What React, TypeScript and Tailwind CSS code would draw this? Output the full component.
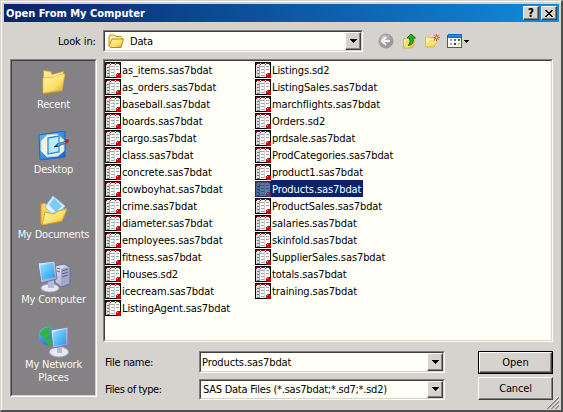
import React from "react";

const left = ["as_items.sas7bdat", "as_orders.sas7bdat", "baseball.sas7bdat", "boards.sas7bdat", "cargo.sas7bdat", "class.sas7bdat", "concrete.sas7bdat", "cowboyhat.sas7bdat", "crime.sas7bdat", "diameter.sas7bdat", "employees.sas7bdat", "fitness.sas7bdat", "Houses.sd2", "icecream.sas7bdat", "ListingAgent.sas7bdat"];
const right = ["Listings.sd2", "ListingSales.sas7bdat", "marchflights.sas7bdat", "Orders.sd2", "prdsale.sas7bdat", "ProdCategories.sas7bdat", "product1.sas7bdat", "Products.sas7bdat", "ProductSales.sas7bdat", "salaries.sas7bdat", "skinfold.sas7bdat", "SupplierSales.sas7bdat", "totals.sas7bdat", "training.sas7bdat"];

const sunken = "border border-t-[#808080] border-l-[#808080] border-b-white border-r-white";
const sunkenInner = "border border-t-[#404040] border-l-[#404040] border-b-[#d6d3ce] border-r-[#d6d3ce]";
const raised = "border border-t-white border-l-white border-b-[#404040] border-r-[#404040] shadow-[inset_-1px_-1px_0_#848284]";

function TableIcon({ selected }: { selected?: boolean }) {
  const paper = selected ? "#6078a4" : "#fff";
  const header = selected ? "#45436b" : "#94080c";
  const line = selected ? "#354f84" : "#a5a5a5";
  return (
    <svg width="16" height="16" viewBox="0 0 16 16" shapeRendering="crispEdges" className="shrink-0">
      <rect width="16" height="16" fill={selected ? "#172b58" : "#000"} />
      <rect x="1" y="1" width="14" height="14" fill={paper} />
      <path d="M1 1h4v1H1zM6 1h4v1H6zM11 1h4v1h-4zM1 2h1v1H1zM5 2h1v1H5zM10 2h1v1h-1zM14 2h1v1h-1z" fill={header} />
      <path d="M1 3h3v12H1z" fill={selected ? "#4e6596" : "#dedede"} />
      <path d="M5 4h4v1H5zM11 4h3v1h-3zM6 7h3v1H6zM11 7h3v1h-3zM6 10h3v1H6zM6 13h3v1H6zM4 3h1v12H4z" fill={line} />
      <path d="M2 5h2v1H2zM2 8h2v1H2zM2 11h2v1H2zM2 14h2v1H2z" fill={selected ? "#2c4478" : "#737373"} />
      <path d="M9 3h1v12H9z" fill={selected ? "#516a9b" : "#cecece"} />
      <path d="M12 11h3v1h1v3h-1v1h-3v-1h-1v-3h1z" fill={selected ? "#66365c" : "#d40000"} />
      <path d="M12 12h1v1h-1z" fill={selected ? "#8190b0" : "#ff9b91"} />
    </svg>
  );
}

function FileRow({ name, selected }: { name: string; selected?: boolean }) {
  return (
    <div className="flex h-[17px] items-center tracking-[-0.1px]">
      <TableIcon selected={selected} />
      <span className={selected ? "flex h-[17px] items-center bg-[#0a246a] pt-[2px] pl-px pr-[2px] text-white" : "pt-[2px] pl-px"}>{name}</span>
    </div>
  );
}

function Arrow() {
  return (
    <span className={`flex w-4 shrink-0 items-center justify-center bg-[#d6d3ce] ${raised}`}>
      <svg width="7" height="4" shapeRendering="crispEdges"><path d="M0 0h7v1H0zM1 1h5v1H1zM2 2h3v1H2zM3 3h1v1H3z" /></svg>
    </span>
  );
}

function Combo({ className, children }: { className: string; children: React.ReactNode }) {
  return (
    <div className={`${sunken} ${className}`}>
      <div className={`flex h-full bg-[#fffff7] ${sunkenInner}`}>
        <div className="flex flex-1 items-center overflow-hidden">{children}</div>
        <Arrow />
      </div>
    </div>
  );
}

function Gradients() {
  return (
    <svg width="0" height="0" className="absolute">
      <defs>
        <linearGradient id="folder" x1="0" y1="0" x2="1" y2="1"><stop stopColor="#fff7ad" /><stop offset=".6" stopColor="#f9df68" /><stop offset="1" stopColor="#d9a51f" /></linearGradient>
        <linearGradient id="screen" x1="0" y1="0" x2="1" y2="1"><stop stopColor="#8de8ff" /><stop offset="1" stopColor="#2795f2" /></linearGradient>
        <linearGradient id="shell" x1="0" y1="0" x2="1" y2="1"><stop stopColor="#f4f4ff" /><stop offset="1" stopColor="#8d91bd" /></linearGradient>
        <linearGradient id="blue" x1="0" y1="0" x2="1" y2="1"><stop stopColor="#66bdf8" /><stop offset="1" stopColor="#1261c8" /></linearGradient>
        <radialGradient id="grey" cx=".35" cy=".3"><stop stopColor="#d0d0d0" /><stop offset="1" stopColor="#9b9b9b" /></radialGradient>
      </defs>
    </svg>
  );
}

const RecentIcon = () => (
  <svg width="32" height="32" viewBox="0 0 32 32">
    <path d="M5 4l8 1 2 3 11-3v3l-2 17-19 3z" fill="#dca52c" />
    <path d="M6 5l6 1 2 3 11-3v3L6 13z" fill="#ffe987" />
    <path d="M16 9l10-1-1 3-10 2z" fill="#fff" />
    <path d="M5 12l11-1 3-2 8-1-3 16-19 3z" fill="url(#folder)" stroke="#dfb139" strokeWidth=".7" />
  </svg>
);
const DesktopIcon = () => (
  <svg width="32" height="32" viewBox="0 0 32 32">
    <path d="M1 4l26-4v26L2 29z" fill="url(#blue)" stroke="#1769cf" />
    <path d="M9 4l10-1 7 6v11l-6 5-11 1-6-6V10z" fill="#f5f1df" stroke="#b6d2e3" />
    <path d="M10 7l11-2v16l-11 2z" fill="#b8edff" stroke="#2c91dc" strokeWidth="1.3" />
    <path d="M16 16l3-3 9-3 1 2-9 3z" fill="#5b9fd9" stroke="#21558b" strokeWidth=".7" />
    <path d="M16 16l3-2 1 2z" fill="#222" /><circle cx="29" cy="10" r="2" fill="#b42918" />
  </svg>
);
const DocumentsIcon = () => (
  <svg width="32" height="32" viewBox="0 0 32 32">
    <path d="M3 8l4-1 2 3 14 1-1 14-19 3z" fill="#f8d65b" stroke="#d39a22" />
    <path d="M7 11L15 0l12 10-9 12z" fill="#d9f4ff" stroke="#89c9ef" />
    <path d="M11 9l5-7 8 8-6 6z" fill="#7dc9f5" />
    <path d="M15 17l14-5-4 7-9 4z" fill="#c4efff" stroke="#61afe0" strokeWidth=".7" />
    <path d="M4 29l3-13 9 2 4-3 9-2-5 12z" fill="url(#folder)" stroke="#dba52c" />
  </svg>
);
const ComputerIcon = () => (
  <svg width="34" height="32" viewBox="0 0 34 32">
    <path d="M18 5l9-2 6 3v17l-9 3-6-5z" fill="url(#shell)" stroke="#696d9f" />
    <path d="M24 8l8-2v16l-8 3z" fill="#a5a6ca" />
    <path d="M25 10l6-2M25 13l6-2M25 16l6-2M20 7l3 1M20 10l3 1" stroke="#62668e" />
    <ellipse cx="13" cy="27" rx="9" ry="4" fill="#e8e8f5" stroke="#a5a7c8" />
    <path d="M11 19h6v8h-6z" fill="#b8b9d2" />
    <path d="M1 2l17-2 2 18-16 4z" fill="url(#shell)" stroke="#7777ae" />
    <path d="M3 4l13-2 2 14-13 3z" fill="url(#screen)" />
  </svg>
);
const NetworkIcon = () => (
  <svg width="32" height="32" viewBox="0 0 32 32">
    <circle cx="10" cy="10" r="9.5" fill="url(#blue)" />
    <path d="M5 3l6-2 3 3-4 2 3 3-6 5-3-4-3-1zM7 15l6-3 3 5-5 3z" fill="#30b442" />
    <ellipse cx="21" cy="26" rx="9.5" ry="5" fill="#e8e8f3" stroke="#aaacc6" /><path d="M19 18h5v9h-5z" fill="#b8b8d1" />
    <path d="M13 4l17-3v18l-15 3z" fill="url(#shell)" stroke="#7880b5" />
    <path d="M15 6l13-3v15l-12 2z" fill="url(#screen)" />
  </svg>
);

const places = [
  { label: ["Recent"], Icon: RecentIcon },
  { label: ["Desktop"], Icon: DesktopIcon },
  { label: ["My Documents"], Icon: DocumentsIcon },
  { label: ["My Computer"], Icon: ComputerIcon },
  { label: ["My Network", "Places"], Icon: NetworkIcon },
];

function SmallFolder() {
  return (
    <svg width="16" height="15" viewBox="0 0 16 15">
      <path d="M1 12V3l1-2h4l2 1.5h5l1 1V6" fill="#fff1a5" stroke="#b9891c" />
      <path d="M2.5 13.5L1 12 4 5h11.5l-2.5 8.5z" fill="url(#folder)" stroke="#b9891c" />
    </svg>
  );
}

function Toolbar() {
  return (
    <div className="ml-[15px] flex h-[22px] items-center">
      <svg width="17" height="16" viewBox="0 0 17 16">
        <circle cx="8" cy="8" r="7" fill="url(#grey)" stroke="#999" />
        <path d="M12 8H5m3-4L4 8l4 4" fill="none" stroke="#f3f3f3" strokeWidth="2" />
      </svg>
      <svg width="15" height="17" viewBox="0 0 15 17" className="ml-[7px]">
        <path d="M1.5 15V6l4-1 1 1 6-1-1 9z" fill="#fff0a0" stroke="#dcb340" />
        <path d="M2 15l3-7 8-1-3 8z" fill="url(#folder)" stroke="#dcb340" strokeWidth=".7" />
        <path d="M6 12.5q3-1.500 1.500-7.500H5L9 1l4.500 4H11q1.500 7-5 7.500z" fill="#2eae2d" stroke="#087914" />
      </svg>
      <svg width="17" height="16" viewBox="0 0 17 16" className="ml-[7px]">
        <path d="M1.500 14V4h4l1 1h4v9z" fill="#fff0a0" stroke="#dfb750" />
        <path d="M2 14l4-6h8l-4 5z" fill="url(#folder)" stroke="#dfb750" strokeWidth=".7" />
        <path d="M12.500 1v7M9 4.500h7M10 2l5 5M15 2l-5 5" stroke="#f4642a" />
        <circle cx="12.500" cy="4.500" r="1.500" fill="#ffe16b" stroke="#e43b17" />
      </svg>
      <svg width="24" height="15" viewBox="0 0 24 15" shapeRendering="crispEdges" className="ml-[6px]">
        <path d="M1 0h13l1 1v13H0V1z" fill="#1264ca" /><path d="M1 1h13v2H1z" fill="#2486e5" />
        <path d="M1 4h13v9H1z" fill="#fffff7" />
        <path d="M3 5h2v2H3z" fill="#a5a2d6" /><path d="M7 5h2v2H7z" fill="#5070c6" /><path d="M11 5h2v2h-2z" fill="#238d35" />
        <path d="M3 9h2v2H3z" fill="#e69974" /><path d="M7 9h2v2H7z" fill="#1244a0" /><path d="M11 9h2v2h-2z" fill="#e6bd52" />
        <path d="M17 6h5v1h-5zM18 7h3v1h-3zM19 8h1v1h-1z" fill="#000" />
      </svg>
    </div>
  );
}

export default function App() {
  return (
    <div className="h-[412px] w-[563px] overflow-hidden border-t border-l border-r-2 border-b-2 border-t-[#d6d3ce] border-l-[#d6d3ce] border-r-[#505050] border-b-[#505050] bg-[#d6d3ce] font-['DejaVu_Sans_Condensed','DejaVu_Sans',sans-serif] text-[11px] leading-[13px] text-black [font-stretch:condensed]">
      <Gradients />
      <div className="relative flex h-full flex-col border-t border-l border-white pt-[2px] pl-[2px]">
        <header className="flex h-[18px] w-[555px] shrink-0 items-center bg-linear-to-r from-[#0a246a] to-[#118bdd] pr-[2px] pl-[2px] font-bold text-white">
          <span className="flex-1 whitespace-nowrap">Open From My Computer</span>
          <button className={`mr-[2px] flex h-[14px] w-4 items-center justify-center bg-[#d6d3ce] text-[12px] font-bold text-black ${raised}`}>?</button>
          <button className={`flex h-[14px] w-4 items-center justify-center bg-[#d6d3ce] ${raised}`}>
            <svg width="8" height="7" shapeRendering="crispEdges"><path d="M0 0h2v1h1v1h2V1h1V0h2v1H7v1H6v1H5v1h1v1h1v1h1v1H6V6H5V5H3v1H2v1H0V6h1V5h1V4h1V3H2V2H1V1H0z" /></svg>
          </button>
        </header>
        <div className="mt-2 flex h-[22px] shrink-0 items-center">
          <label className="w-[99px] pl-[54px] tracking-[-0.1px] whitespace-nowrap">Look in:</label>
          <Combo className="h-[22px] w-[260px]">
            <span className="ml-[3px]"><SmallFolder /></span><span className="ml-[6px] tracking-[-0.2px]">Data</span>
          </Combo>
          <Toolbar />
        </div>
        <div className="mt-[7px] flex">
          <nav className={`ml-[6px] h-[338px] w-[87px] ${sunken}`}>
            <div className={`flex h-full flex-col bg-[#848284] pt-[5px] tracking-[-0.2px] text-[#f7f7f7] ${sunkenInner}`}>
              {places.map(({ label, Icon }) => (
                <div key={label[0]} className="flex h-[65px] shrink-0 flex-col items-center text-center">
                  <Icon />
                  {label.map((line) => <span key={line} className="whitespace-nowrap">{line}</span>)}
                </div>
              ))}
            </div>
          </nav>
          <main className="ml-[6px] w-[450px]">
            <div className={`h-[283px] ${sunken}`}>
              <div className={`flex h-full bg-[#fffff7] ${sunkenInner}`}>
                <div className="w-[150px]">{left.map((n) => <FileRow key={n} name={n} />)}</div>
                <div>{right.map((n) => <FileRow key={n} name={n} selected={n === "Products.sas7bdat"} />)}</div>
              </div>
            </div>
            <div className="mt-[9px] flex">
              <div className="flex flex-col gap-[5px]">
                <div className="flex h-[22px] items-center"><label className="w-24 pl-[2px] tracking-[-0.3px]">File name:</label><Combo className="h-[22px] w-[246px]"><span className="pl-px tracking-[-0.1px]">Products.sas7bdat</span></Combo></div>
                <div className="flex h-[22px] items-center"><label className="w-24 pl-[2px] tracking-[-0.45px]">Files of type:</label><Combo className="h-[21px] w-[246px]"><span className="pl-[2px] tracking-[-0.25px] whitespace-nowrap">SAS Data Files (*.sas7bdat;*.sd7;*.sd2)</span></Combo></div>
              </div>
              <div className="ml-[33px] flex flex-col gap-[3px]">
                <div className="h-[23px] border border-black"><button className={`h-full w-[73px] ${raised}`}>Open</button></div>
                <button className={`h-[23px] w-[75px] tracking-[-0.15px] ${raised}`}>Cancel</button>
              </div>
            </div>
          </main>
        </div>
        <svg width="12" height="12" className="absolute right-[2px] bottom-px" viewBox="0 0 12 12"><path d="M0 12L12 0M4 12l8-8M8 12l4-4" stroke="#848284" strokeWidth="1.6" /><path d="M-1 12L12-1M3 12l9-9M7 12l5-5" stroke="#fff" strokeWidth=".7" /></svg>
      </div>
    </div>
  );
}
